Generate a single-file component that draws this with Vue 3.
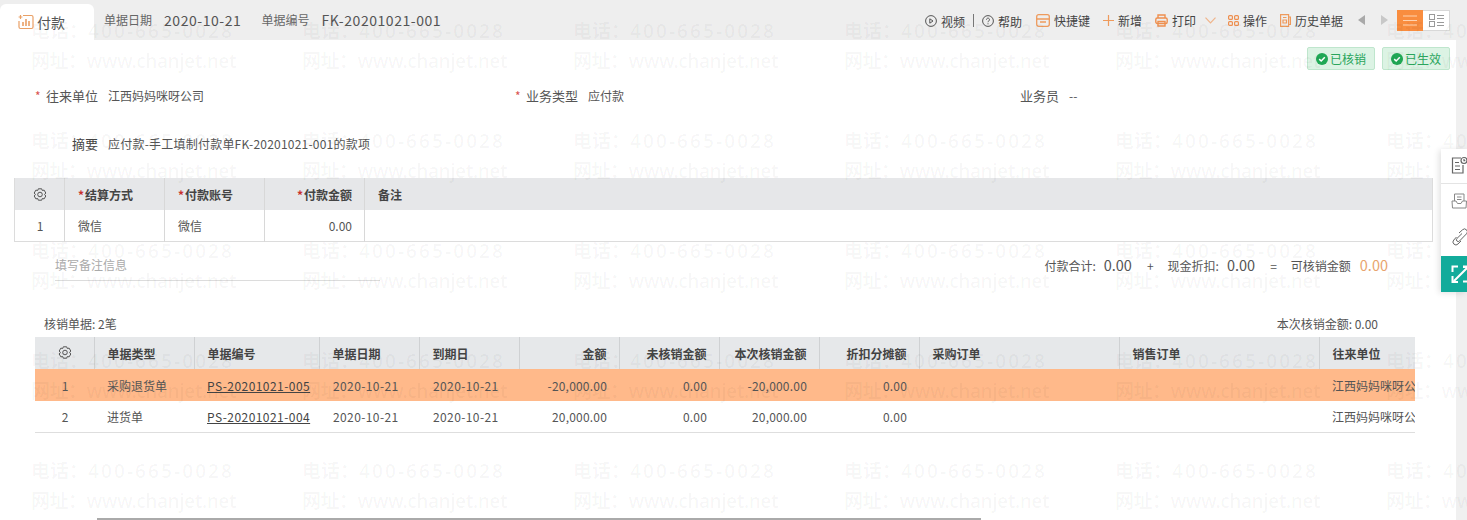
<script setup>
const marks = []
for (let r = 0; r < 5; r++) {
  for (let c = 0; c < 6; c++) marks.push(`${r}-${c}`)
}

const columns = [
  { label: '单据类型', width: 100 },
  { label: '单据编号', width: 125 },
  { label: '单据日期', width: 100 },
  { label: '到期日', width: 100 },
  { label: '金额', width: 100, right: true },
  { label: '未核销金额', width: 100, right: true },
  { label: '本次核销金额', width: 100, right: true },
  { label: '折扣分摊额', width: 100, right: true },
  { label: '采购订单', width: 200 },
  { label: '销售订单', width: 200 },
  { label: '往来单位', width: 96 }
]

const rows = [
  { no: 1, type: '采购退货单', code: 'PS-20201021-005', date: '2020-10-21', due: '2020-10-21', amount: '-20,000.00', open: '0.00', now: '-20,000.00', discount: '0.00', active: true },
  { no: 2, type: '进货单', code: 'PS-20201021-004', date: '2020-10-21', due: '2020-10-21', amount: '20,000.00', open: '0.00', now: '20,000.00', discount: '0.00', active: false }
]
</script>

<template>
  <div class="page">
    <header class="topbar">
      <div class="tab">
        <svg class="tab-icon" width="16" height="16" viewBox="0 0 16 16" fill="none" stroke="#e9a066" stroke-width="1.2">
          <path d="M5 1.500h8.500a1.500 1.500 0 0 1 1.500 1.500v10a1.500 1.500 0 0 1-1.500 1.500h-11A1.500 1.500 0 0 1 1 13V7" />
          <path d="M5 12V8M8 12V5M11 12V7" stroke-width="1.6" />
          <path d="M2.500 1v4M.6 3h3.800" />
        </svg>
        <span>付款</span>
      </div>
      <span class="head-label first">单据日期</span>
      <span class="head-value">2020-10-21</span>
      <span class="head-label second">单据编号</span>
      <span class="head-value">FK-20201021-001</span>

      <nav class="tools">
        <span class="tool tool-video">
          <svg width="12" height="12" viewBox="0 0 12 12" fill="none" stroke="#555"><circle cx="6" cy="6" r="5.400" /><path d="M4.800 3.800 8 6 4.800 8.200z" /></svg>
          视频
        </span>
        <i class="tool-line"></i>
        <span class="tool tool-help">
          <svg width="12" height="12" viewBox="0 0 12 12" fill="none" stroke="#555"><circle cx="6" cy="6" r="5.400" /><path d="M4.500 4.600a1.500 1.500 0 1 1 2.300 1.300c-.6.400-.8.600-.8 1.300M6 8.300v1" /></svg>
          帮助
        </span>
        <span class="tool tool-keys">
          <svg width="14" height="13" viewBox="0 0 14 13" fill="none" stroke="#ee9a5c" stroke-width="1.300"><rect x=".7" y=".7" width="12.600" height="11.600" rx="2" /><path d="M.7 5h12.600M4 8h6" /></svg>
          快捷键
        </span>
        <span class="tool tool-add">
          <svg width="11" height="11" viewBox="0 0 11 11" stroke="#ee9a5c" stroke-width="1.200"><path d="M5.500 0v11M0 5.500h11" /></svg>
          新增
        </span>
        <span class="tool tool-print">
          <svg width="13" height="13" viewBox="0 0 13 13" fill="none" stroke="#ee8f4f" stroke-width="1.400"><path d="M3 4V1h7v3" /><rect x=".8" y="4" width="11.400" height="5.500" rx="1.500" /><path d="M3 7.500h7V12H3z" /></svg>
          打印
        </span>
        <svg class="tool-chevron" width="11" height="7" viewBox="0 0 11 7" fill="none" stroke="#f0b48a" stroke-width="1.200"><path d="M.5.700 5.500 5.800 10.500.7" /></svg>
        <span class="tool tool-ops">
          <svg width="11" height="11" viewBox="0 0 11 11" fill="none" stroke="#ee8f4f" stroke-width="1.200"><rect x=".6" y=".6" width="3.800" height="3.800" rx="1" /><rect x="6.600" y=".6" width="3.800" height="3.800" rx="1" /><rect x=".6" y="6.600" width="3.800" height="3.800" rx="1" /><rect x="6.600" y="6.600" width="3.800" height="3.800" rx="1" /></svg>
          操作
        </span>
        <span class="tool tool-history">
          <svg width="11" height="13" viewBox="0 0 11 13" fill="none" stroke="#ee9a5c" stroke-width="1.200"><path d="M.6.600h8v11.800h-8zM8.600 3h1.800v7.500H8.600M3 3.500h3.500M3 6h3.500v3H3z" /></svg>
          历史单据
        </span>
        <span class="arrow arrow-left"></span>
        <span class="arrow arrow-right"></span>
        <div class="view-switch">
          <span class="view-on">
            <svg width="14" height="11" viewBox="0 0 14 11" stroke="#ffd3b0" stroke-width="1"><path d="M0 1h14M0 5.500h14M0 10h14" /></svg>
          </span>
          <span class="view-off">
            <svg width="15" height="13" viewBox="0 0 15 13" fill="none" stroke="#9a9a9a"><rect x=".5" y=".5" width="5" height="5" /><rect x=".5" y="7.500" width="5" height="5" /><path d="M8 1.500h7M8 4.500h7M8 8.500h7M8 11.500h7" /></svg>
          </span>
        </div>
      </nav>
    </header>

    <main class="content">
      <div class="tags">
        <span class="tag">
          <svg width="12" height="12" viewBox="0 0 12 12"><circle cx="6" cy="6" r="6" fill="#1fa855" /><path d="M3.200 6.100 5.200 8l3.600-3.800" fill="none" stroke="#fff" stroke-width="1.500" /></svg>
          已核销
        </span>
        <span class="tag">
          <svg width="12" height="12" viewBox="0 0 12 12"><circle cx="6" cy="6" r="6" fill="#1fa855" /><path d="M3.200 6.100 5.200 8l3.600-3.800" fill="none" stroke="#fff" stroke-width="1.500" /></svg>
          已生效
        </span>
      </div>

      <div class="form-row">
        <div class="field field-unit"><em>*</em><label>往来单位</label><span>江西妈妈咪呀公司</span></div>
        <div class="field field-kind"><em>*</em><label>业务类型</label><span>应付款</span></div>
        <div class="field field-staff"><label>业务员</label><span>--</span></div>
      </div>

      <div class="summary"><label>摘要</label><span>应付款-手工填制付款单FK-20201021-001的款项</span></div>

      <table class="pay-table">
        <colgroup>
          <col style="width: 50px" /><col style="width: 100px" /><col style="width: 100px" /><col style="width: 100px" /><col />
        </colgroup>
        <thead>
          <tr>
            <th class="center">
              <svg class="gear" width="14" height="14" viewBox="0 0 14 14" fill="none" stroke="#555"><path d="M5.300.8h3.400l.6 1.700 1.800-.4 1.700 2.900-1.200 1.500 1.200 1.500-1.700 2.900-1.800-.4-.6 1.700H5.300l-.6-1.700-1.800.4L1.200 8l1.200-1.500-1.200-1.500 1.700-2.900 1.800.4z" /><circle cx="7" cy="6.500" r="2.300" /></svg>
            </th>
            <th><em>*</em>结算方式</th>
            <th><em>*</em>付款账号</th>
            <th class="right"><em>*</em>付款金额</th>
            <th>备注</th>
          </tr>
        </thead>
        <tbody>
          <tr>
            <td class="center">1</td>
            <td>微信</td>
            <td>微信</td>
            <td class="right">0.00</td>
            <td></td>
          </tr>
        </tbody>
      </table>

      <div class="note-row">
        <div class="note">填写备注信息</div>
        <div class="totals">
          <span>付款合计:</span><b class="num">0.00</b>
          <i class="op">+</i>
          <span>现金折扣:</span><b class="num">0.00</b>
          <i class="op">=</i>
          <span>可核销金额</span><b class="num n3">0.00</b>
        </div>
      </div>

      <div class="caption-row">
        <span>核销单据: 2笔</span>
        <span>本次核销金额: 0.00</span>
      </div>

      <table class="bill-table">
        <colgroup>
          <col style="width: 59px" />
          <col v-for="c in columns" :key="c.label" :style="{ width: c.width + 'px' }" />
        </colgroup>
        <thead>
          <tr>
            <th class="center">
              <svg class="gear" width="14" height="14" viewBox="0 0 14 14" fill="none" stroke="#555"><path d="M5.300.8h3.400l.6 1.700 1.800-.4 1.700 2.900-1.200 1.500 1.200 1.500-1.700 2.900-1.800-.4-.6 1.700H5.300l-.6-1.700-1.800.4L1.200 8l1.200-1.500-1.200-1.500 1.700-2.900 1.800.4z" /><circle cx="7" cy="6.500" r="2.300" /></svg>
            </th>
            <th v-for="c in columns" :key="c.label" :class="{ right: c.right }">{{ c.label }}</th>
          </tr>
        </thead>
        <tbody>
          <tr v-for="r in rows" :key="r.no" :class="{ active: r.active }">
            <td class="center">{{ r.no }}</td>
            <td>{{ r.type }}</td>
            <td><a class="code">{{ r.code }}</a></td>
            <td class="date">{{ r.date }}</td>
            <td class="date">{{ r.due }}</td>
            <td class="right money">{{ r.amount }}</td>
            <td class="right money">{{ r.open }}</td>
            <td class="right money">{{ r.now }}</td>
            <td class="right money">{{ r.discount }}</td>
            <td></td>
            <td></td>
            <td class="clip">江西妈妈咪呀公司</td>
          </tr>
        </tbody>
      </table>
    </main>

    <div class="watermarks">
      <div v-for="m in marks" :key="m" class="mark">
        <span>电话&#xFF1A;<span class="mark-phone">400-665-0028</span></span>
        <span class="mark-url">网址&#xFF1A;www.chanjet.net</span>
      </div>
    </div>

    <aside class="side">
      <div class="side-item line">
        <svg width="20" height="20" viewBox="0 0 20 20" fill="none" stroke="#666" stroke-width="1.200"><path d="M10 2H1.500v15H12V9" /><path d="M4 6.500h4M4 10h5M4 13.500h5" /><circle cx="13" cy="4.500" r="3" /><path d="M13 3v1.700h1.300" /></svg>
      </div>
      <div class="side-item">
        <svg width="20" height="20" viewBox="0 0 20 20" fill="none" stroke="#888"><path d="M3.500 9V2h9.500v7M1 9l.5 7h13.500l.5-7h-4l-1.500 2.500H6.500L5 9z" /><path d="M6 5h4.500M6 7.500h4.500" /></svg>
      </div>
      <div class="side-item">
        <svg width="20" height="20" viewBox="0 0 20 20" fill="none" stroke="#666"><path d="M8 5 11.500 1.800a2.800 2.800 0 0 1 4 4L8.500 13a1.800 1.800 0 0 1-2.600-2.500L11 5.500" /><path d="M5.500 9 2.800 12a2.900 2.900 0 0 0 4.200 4l3-3" /></svg>
      </div>
      <div class="side-item teal">
        <svg width="20" height="20" viewBox="0 0 20 20" fill="none" stroke="#fff" stroke-width="2"><path d="M7 2.500H1.500V8M1.500 12v6H7M12 2.500h6M17 3 3 17" /><path d="M12 17.500h6V12" /><path d="M12 3h6v5" /></svg>
      </div>
    </aside>

    <div class="scroll-thumb"></div>
  </div>
</template>

<style scoped>
.page {
  position: relative;
  width: 1467px;
  height: 520px;
  overflow: hidden;
  background: #f0f0f0;
  color: #555;
  font-family: "Noto Sans CJK SC", "Noto Sans", sans-serif;
  font-size: 12px;
}

.topbar {
  height: 40px;
  display: flex;
  align-items: center;
  padding-right: 17px;
  background: #eeeeee;
}
.tab {
  width: 94px;
  height: 36px;
  margin-top: 4px;
  padding-left: 18px;
  display: flex;
  align-items: center;
  gap: 3px;
  box-sizing: border-box;
  background: #fff;
  border-radius: 6px 6px 0 0;
  font-size: 14px;
  color: #555;
}
.tab-icon {
  flex: none;
}
.head-label {
  margin-bottom: 1px;
  color: #666;
}
.head-label.first {
  margin-left: 10px;
}
.head-label.second {
  margin-left: 20px;
}
.head-value {
  margin-left: 12px;
  margin-bottom: 1px;
  font-size: 14px;
  letter-spacing: 0.55px;
  color: #555;
}

.tools {
  margin-left: auto;
  display: flex;
  align-items: center;
  color: #444;
}
.tool {
  display: flex;
  align-items: center;
  gap: 4px;
  white-space: nowrap;
}
.tool-video,
.tool-help {
  margin-top: 2px;
}
.tool-line {
  width: 1px;
  height: 13px;
  margin: 0 8px 0 8px;
  background: #777;
}
.tool-keys {
  margin-left: 14px;
}
.tool-add {
  margin-left: 13px;
}
.tool-print {
  margin-left: 13px;
}
.tool-chevron {
  margin-left: 9px;
}
.tool-ops {
  margin-left: 12px;
}
.tool-history {
  margin-left: 13px;
}
.arrow {
  width: 0;
  height: 0;
  border-top: 5px solid transparent;
  border-bottom: 5px solid transparent;
}
.arrow-left {
  margin-left: 15px;
  border-right: 7px solid #a9a9a9;
}
.arrow-right {
  margin-left: 16px;
  border-left: 7px solid #c8c8c8;
}
.view-switch {
  margin-left: 9px;
  width: 53px;
  height: 21px;
  display: flex;
  box-sizing: border-box;
  border: 1px solid #d8d8d8;
  background: #fff;
}
.view-on,
.view-off {
  flex: 1;
  display: flex;
  align-items: center;
  justify-content: center;
}
.view-on {
  margin: -1px 0 -1px -1px;
  background: #f98d3f;
}

.content {
  width: 1456px;
  height: 480px;
  box-sizing: border-box;
  padding-top: 7px;
  background: #fff;
}
.tags {
  display: flex;
  justify-content: flex-end;
  gap: 7px;
  padding-right: 6px;
}
.tag {
  height: 23px;
  width: 68px;
  display: flex;
  align-items: center;
  justify-content: center;
  gap: 2px;
  box-sizing: border-box;
  border: 1px solid #bfe6cd;
  border-radius: 2px;
  background: #dcf3e4;
  color: #2aa55c;
}
.form-row {
  display: flex;
  height: 20px;
  margin-top: 15px;
  align-items: center;
}
.field {
  display: flex;
  align-items: center;
  white-space: nowrap;
}
.field em {
  width: 11px;
  font-style: normal;
  color: #d9534f;
}
.field label {
  margin-right: 10px;
  font-size: 13px;
  color: #555;
}
.field-unit {
  width: 480px;
  margin-left: 35px;
}
.field-kind {
  width: 505px;
}
.summary {
  display: flex;
  height: 20px;
  margin: 28px 0 0 72px;
  align-items: center;
}
.summary label {
  margin-right: 10px;
  font-size: 13px;
  color: #444;
}
.summary span {
  letter-spacing: 0.22px;
}

table {
  table-layout: fixed;
  border-collapse: collapse;
  border-spacing: 0;
}
th {
  height: 32px;
  padding: 1px 12px 0 13px;
  text-align: left;
  font-weight: 700;
  font-size: 12px;
  color: #444;
  white-space: nowrap;
  box-sizing: border-box;
}
td {
  height: 32px;
  padding: 1px 12px 0 13px;
  color: #555;
  white-space: nowrap;
  box-sizing: border-box;
}
th em {
  font-style: normal;
  color: #c9302c;
  margin-right: 1px;
}
.center {
  text-align: center;
}
.right {
  text-align: right;
}
.gear {
  display: block;
  margin: 0 auto;
}

.pay-table {
  width: 1419px;
  margin: 25px 0 0 14px;
  border-bottom: 1px solid #dcdcdc;
  border-left: 1px solid #dcdcdc;
  border-right: 1px solid #dcdcdc;
}
.pay-table thead tr {
  background: #e6e7e9;
}
.pay-table th,
.pay-table td {
  border-right: 1px solid #d8d8d8;
}
.pay-table td {
  height: 31px;
}
.pay-table th:last-child,
.pay-table td:last-child {
  border-right: 0;
}

.note-row {
  display: flex;
  justify-content: space-between;
  height: 31px;
  margin-top: 8px;
}
.note {
  width: 325px;
  height: 31px;
  margin-left: 55px;
  padding-top: 6px;
  box-sizing: border-box;
  border-bottom: 1px solid #dcdcdc;
  color: #aaa;
}
.totals {
  display: flex;
  align-items: baseline;
  height: 20px;
  padding: 4px 68px 0 0;
  color: #555;
}
.num {
  font-weight: 400;
  font-size: 14.5px;
  margin-left: 8px;
}
.n3 {
  margin-left: 9px;
  color: #e8a46e;
}
.op {
  font-style: normal;
  margin: 0 14px 0 15px;
}

.caption-row {
  display: flex;
  justify-content: space-between;
  height: 20px;
  margin-top: 34px;
  padding: 0 78px 0 44px;
  color: #555;
}

.bill-table {
  width: 1380px;
  margin: 2px 0 0 35px;
}
.bill-table thead tr {
  background: #e6e8ea;
}
.bill-table th {
  border-right: 1px solid #cfd1d3;
}
.bill-table th:last-child {
  border-right: 0;
}
.bill-table tbody tr {
  border-bottom: 1px solid #dedede;
}
.bill-table tbody tr.active {
  background: #ffb98a;
  border-bottom: 0;
}
.clip {
  overflow: hidden;
  padding-right: 0;
  text-overflow: clip;
}
.code {
  color: #444;
  letter-spacing: 0.45px;
  text-decoration: underline;
}
.date {
  padding-left: 14px;
  letter-spacing: 0.4px;
}
.money {
  letter-spacing: 0.2px;
}

.watermarks {
  position: absolute;
  left: 31px;
  top: 16px;
  display: grid;
  grid-template-columns: repeat(6, 271px);
  grid-auto-rows: 110px;
  pointer-events: none;
}
.mark {
  display: flex;
  flex-direction: column;
  font-family: "Noto Sans", "Noto Sans CJK SC", sans-serif;
  font-size: 19px;
  font-weight: 600;
  line-height: 30px;
  white-space: nowrap;
  color: rgba(0, 0, 0, 0.035);
}
.mark-phone {
  letter-spacing: 2.1px;
}
.mark-url {
  letter-spacing: -0.5px;
}

.side {
  position: absolute;
  left: 1441px;
  top: 149px;
  width: 26px;
  background: #fff;
  box-shadow: -2px 1px 6px rgba(0, 0, 0, 0.12);
  overflow: hidden;
}
.side-item {
  height: 36px;
  padding-left: 10px;
  display: flex;
  align-items: center;
  box-sizing: border-box;
}
.side-item svg {
  flex: none;
}
.side-item.line {
  height: 35px;
  border-bottom: 1px solid #e4e4e4;
}
.side-item.teal {
  background: #12ab9b;
}

.scroll-thumb {
  position: absolute;
  left: 97px;
  top: 518px;
  width: 884px;
  height: 2px;
  background: #aaa;
}
</style>

<style>
html,
body {
  margin: 0;
  overflow: hidden;
}
</style>
